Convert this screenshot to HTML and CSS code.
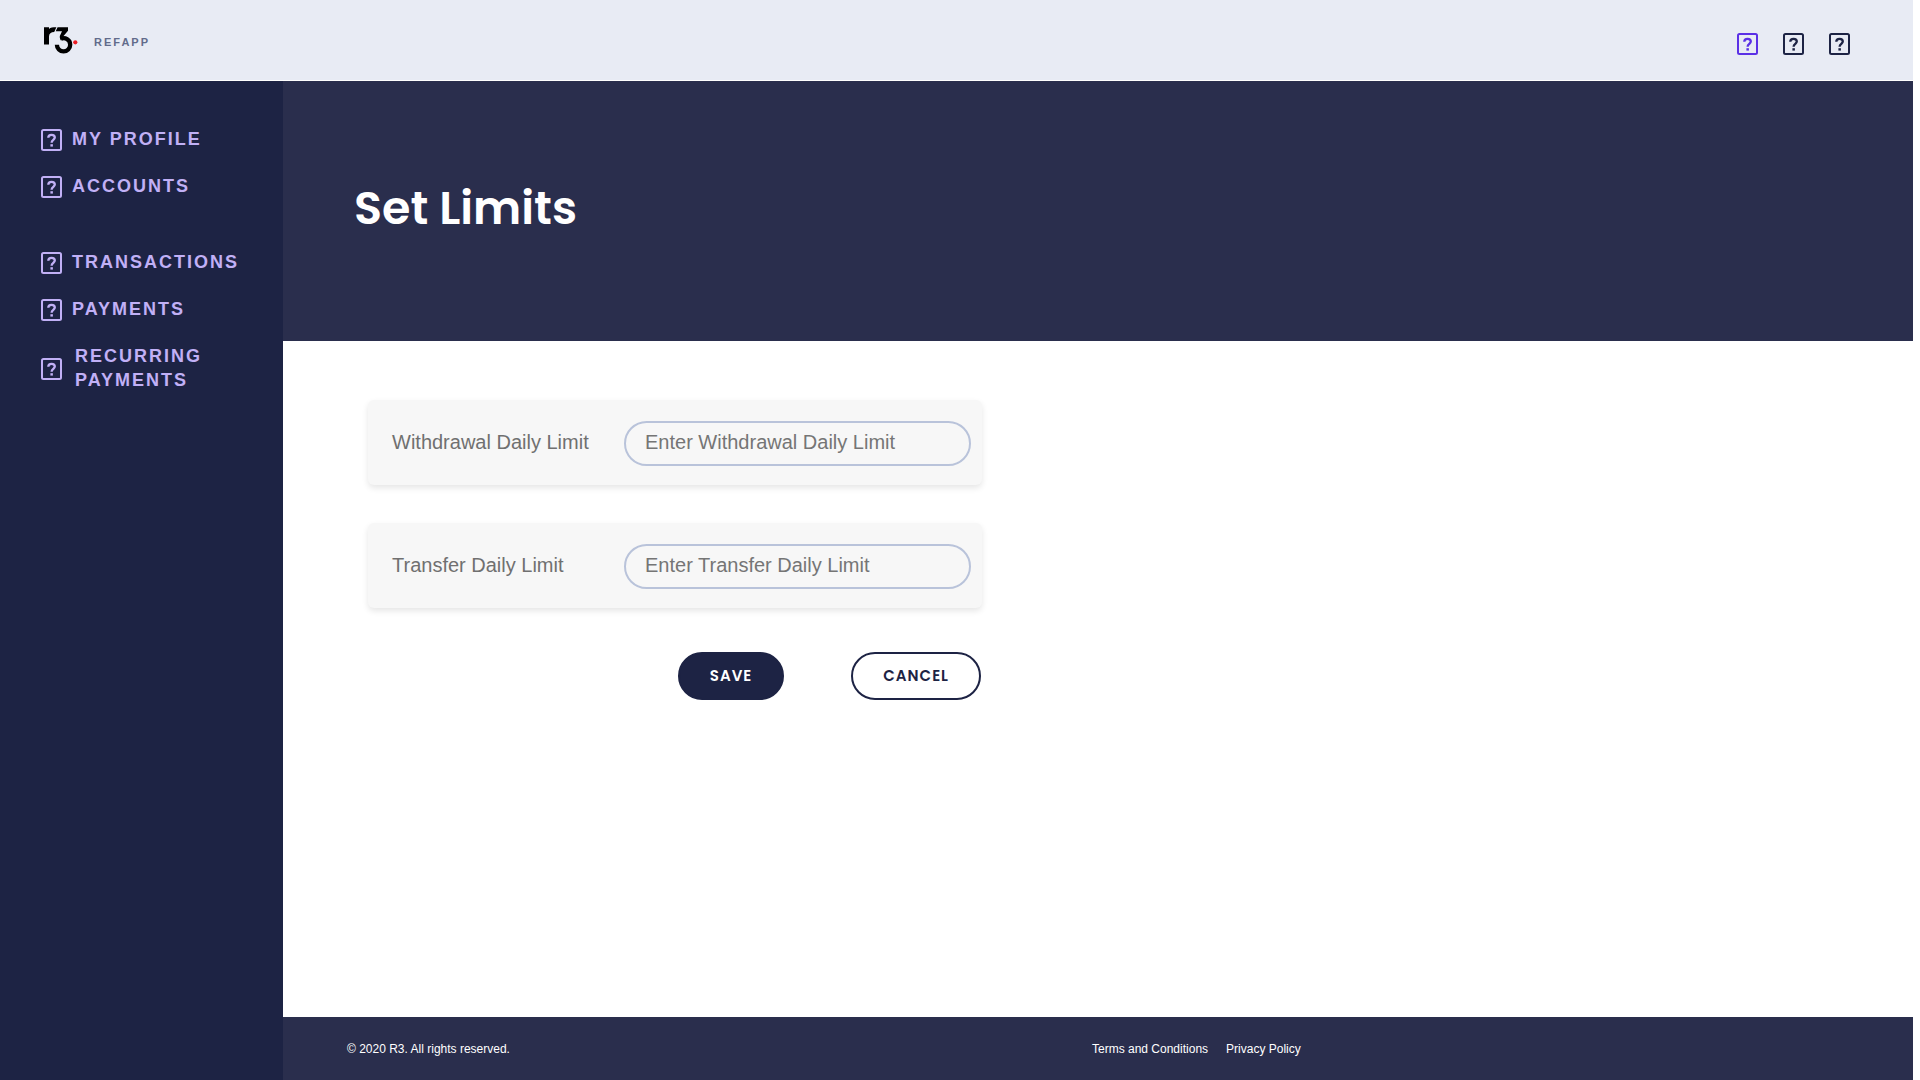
FILE: index.html
```html
<!DOCTYPE html>
<html lang="en">
<head>
<meta charset="utf-8">
<meta name="viewport" content="width=device-width, initial-scale=1">
<title>Set Limits - R3 Refapp</title>
<link rel="stylesheet" href="styles.css">
</head>
<body>
<svg class="symbols" aria-hidden="true">
  <symbol id="help-box" viewBox="0 0 21 22">
    <rect x="1" y="1" width="19" height="20" rx="1.5" fill="none" stroke="currentColor" stroke-width="2"/>
    <path d="M7.300 8.800C7.300 6.900 8.600 5.900 10.600 5.900s3.200 1 3.200 2.700c0 2.200-3.200 2.500-3.200 5.200" fill="none" stroke="currentColor" stroke-width="2.300"/>
    <rect x="9.400" y="15.200" width="2.500" height="2.400" fill="currentColor"/>
  </symbol>
</svg>
<div class="app">
  <header class="topbar">
    <a class="brand" href="#">
      <svg class="logo" viewBox="0 0 36 28" role="img" aria-label="R3">
        <path d="M1 1.300H6V3C7.500 1.600 9.500 1.300 13.400 1.300L11.200 6C8 6 6 7.500 6 10.500V18.600H1Z"/>
        <path d="M14.600 1.300H25V4.700L19.900 10.800L17.600 14.600L16.800 11.600V10L19 5.300H12.700Z"/>
        <path d="M17.800 12.900C22 10.800 27.200 13.500 27.200 18.700A6.600 6.600 0 0 1 13.900 18.700" fill="none" stroke="#000" stroke-width="4.300"/>
        <circle cx="32.300" cy="16.300" r="2.100" fill="#ec1d24"/>
      </svg>
      <span>REFAPP</span>
    </a>
    <div class="actions">
      <button class="icon-button active" aria-label="Notifications"><svg><use href="#help-box"/></svg></button>
      <button class="icon-button" aria-label="Account"><svg><use href="#help-box"/></svg></button>
      <button class="icon-button" aria-label="Log out"><svg><use href="#help-box"/></svg></button>
    </div>
  </header>
  <nav class="sidebar">
    <ul>
      <li><a href="#"><svg><use href="#help-box"/></svg><span>MY PROFILE</span></a></li>
      <li><a href="#"><svg><use href="#help-box"/></svg><span>ACCOUNTS</span></a></li>
    </ul>
    <ul>
      <li><a href="#"><svg><use href="#help-box"/></svg><span>TRANSACTIONS</span></a></li>
      <li><a href="#"><svg><use href="#help-box"/></svg><span>PAYMENTS</span></a></li>
      <li><a class="multiline" href="#"><svg><use href="#help-box"/></svg><span>RECURRING PAYMENTS</span></a></li>
    </ul>
  </nav>
  <main class="content">
    <div class="banner"><h1>Set Limits</h1></div>
    <form class="limits">
      <div class="field">
        <label for="withdrawal">Withdrawal Daily Limit</label>
        <input id="withdrawal" type="text" placeholder="Enter Withdrawal Daily Limit">
      </div>
      <div class="field">
        <label for="transfer">Transfer Daily Limit</label>
        <input id="transfer" type="text" placeholder="Enter Transfer Daily Limit">
      </div>
      <div class="buttons">
        <button class="button primary" type="button">SAVE</button>
        <button class="button" type="button">CANCEL</button>
      </div>
    </form>
    <footer class="footer">
      <p>© 2020 R3. All rights reserved.</p>
      <div class="legal">
        <a href="#">Terms and Conditions</a>
        <a href="#">Privacy Policy</a>
      </div>
    </footer>
  </main>
</div>
</body>
</html>
```
FILE: styles.css
```css
* {
  box-sizing: border-box;
}

body {
  margin: 0;
  background: #fff;
  font-family: "Liberation Sans", Arial, sans-serif;
}

h1, p, ul {
  margin: 0;
  padding: 0;
}

ul {
  list-style: none;
}

a {
  color: inherit;
  text-decoration: none;
}

.symbols {
  display: none;
}

.app {
  display: grid;
  grid-template-columns: 283px 1fr;
  grid-template-rows: 80px 1fr;
  row-gap: 1px;
  min-height: 100vh;
  margin-right: 7px;
}

.topbar {
  grid-column: 1 / -1;
  display: flex;
  align-items: center;
  justify-content: space-between;
  padding: 0 63px 0 43px;
  background: #e8ebf4;
}

.brand {
  display: flex;
  align-items: center;
  gap: 15px;
  color: #626b8b;
  font-size: 11px;
  font-weight: 700;
  line-height: 16px;
  letter-spacing: 2px;
}

.brand span {
  padding-top: 4px;
}

.logo {
  width: 36px;
  height: 28px;
}

.actions {
  display: flex;
  gap: 25px;
  padding-top: 8px;
}

.icon-button {
  display: flex;
  padding: 0;
  border: 0;
  background: none;
  color: #1d2344;
}

.icon-button.active {
  color: #5b30e6;
}

.icon-button svg,
.sidebar svg {
  flex: none;
  width: 21px;
  height: 22px;
}

.sidebar {
  display: flex;
  flex-direction: column;
  gap: 50px;
  padding: 46px 32px 0 41px;
  background: #1d2344;
  color: #c1b0f6;
  font-size: 18px;
  font-weight: 700;
  line-height: 24px;
  letter-spacing: 2px;
}

.sidebar ul {
  display: grid;
  gap: 21px;
}

.sidebar a {
  display: flex;
  align-items: center;
  gap: 10px;
}

.sidebar span {
  padding-bottom: 2px;
}

.sidebar .multiline {
  gap: 13px;
}

.content {
  display: flex;
  flex-direction: column;
}

.banner {
  display: flex;
  align-items: center;
  min-height: 260px;
  padding: 0 71px 6px;
  background: #2a2e4d;
  color: #fff;
}

h1 {
  font: 600 46px/72px Poppins, Inter, sans-serif;
}

.limits {
  display: flex;
  flex: 1;
  flex-direction: column;
  gap: 38px;
  width: 100%;
  max-width: 784px;
  padding: 59px 85px;
}

.field {
  display: grid;
  grid-template-columns: 1fr 347px;
  align-items: center;
  padding: 21px 11px 19px 24px;
  border-radius: 6px;
  background: #f7f7f7;
  box-shadow: 0 3px 6px rgba(0, 0, 0, 0.1);
  color: #707070;
  font-size: 20px;
}

.field label {
  padding-bottom: 2px;
}

.field input {
  width: 100%;
  height: 45px;
  padding: 0 19px 2px;
  border: 2px solid #b9c3da;
  border-radius: 23px;
  background: none;
  font: inherit;
}

.field input::placeholder {
  color: #757575;
}

.buttons {
  display: flex;
  justify-content: flex-end;
  gap: 67px;
  padding: 6px 1px 0 0;
}

.button {
  height: 48px;
  padding: 0 30px;
  border: 2px solid #1d2344;
  border-radius: 24px;
  background: #fff;
  color: #1d2344;
  font: 600 15px/24px Poppins, Inter, sans-serif;
  letter-spacing: 1px;
}

.button.primary {
  background: #1d2344;
  color: #fff;
}

.footer {
  display: grid;
  grid-template-columns: 1fr 1fr;
  align-items: center;
  min-height: 63px;
  padding: 0 76px 0 64px;
  background: #2a2e4d;
  color: #fff;
  font-size: 12px;
}

.legal {
  display: flex;
  gap: 18px;
}
```
